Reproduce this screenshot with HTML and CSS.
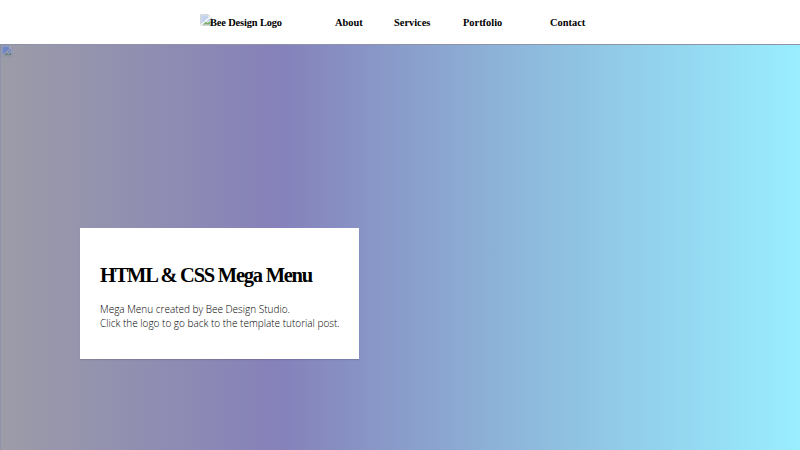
FILE: index.html
```html
<!DOCTYPE html>
<html lang="en">
<head>
<meta charset="utf-8">
<title>HTML &amp; CSS Mega Menu</title>
<link rel="stylesheet" href="styles.css">
</head>
<body>
<header class="nav">
  <a class="logo" href="#">
    <svg class="broken" viewBox="0 0 16 16" aria-hidden="true">
      <path d="M1 1h10l4 4v10H1z" fill="#eef0f3" stroke="#b4b8c0"/>
      <path d="M2 2h9v3h3v3l-4 3-2-2-6 5z" fill="#c3d3ef"/>
      <path d="M2 14l5-5 3 3 4-3v5H2z" fill="#7fae70"/>
      <path d="M1 15L15 3" stroke="#fff" stroke-width="1.5"/>
    </svg><span>Bee Design Logo</span>
  </a>
  <nav class="links">
    <a class="about" href="#">About</a>
    <a class="services" href="#">Services</a>
    <a class="portfolio" href="#">Portfolio</a>
    <a class="contact" href="#">Contact</a>
  </nav>
</header>
<main class="hero">
  <svg class="broken hero-icon" viewBox="0 0 16 16" aria-hidden="true">
    <path d="M1 1h10l4 4v10H1z" fill="#b4b8cc" stroke="#8a8fa6"/>
    <path d="M2 2h9v3h3v3l-4 3-2-2-6 5z" fill="#6f86c4"/>
    <path d="M2 14l5-5 3 3 4-3v5H2z" fill="#6b7f80"/>
    <path d="M1 15L15 3" stroke="#9c9ca8" stroke-width="1.5"/>
  </svg>
  <section class="card">
    <h1>HTML &amp; CSS Mega Menu</h1>
    <p>Mega Menu created by Bee Design Studio.<br>Click the logo to go back to the template tutorial post.</p>
  </section>
</main>
</body>
</html>
```
FILE: styles.css
```css
* { box-sizing: border-box; }
html, body { margin: 0; height: 100%; }
body { width: 800px; height: 450px; overflow: hidden; background: #fff; }
a { color: #000; text-decoration: none; }
.nav {
  height: 44px;
  padding: 1px 0 0 200px;
  display: flex;
  align-items: center;
  background: #fff;
  font: 700 10.4px/14px "Liberation Serif", serif;
}
.logo { display: flex; align-items: center; width: 135px; }
.logo span { letter-spacing: -.13px; }
.broken { width: 12px; height: 12px; flex: none; }
.logo .broken { margin-top: -5px; margin-right: -2px; }
.links { display: flex; }
.about { width: 59px; }
.services { width: 69px; }
.portfolio { width: 87px; }
.hero {
  height: 406px;
  padding: 183px 0 0 79px;
  position: relative;
  border: 1px solid #8f93a8;
  border-width: 1px 0 0 1px;
  background: linear-gradient(90deg, #9c9ca8 0%, #8581ba 35%, #8ebbdd 67%, #99eeff 100%);
}
.hero-icon { position: absolute; left: 0; top: 0; }
.card {
  width: 279px;
  height: 131px;
  padding: 34px 20px 0;
  background: #fff;
  box-shadow: 0 1px 1px rgba(0,0,0,.12);
}
h1 {
  margin: 0 0 14px;
  font: 700 20.5px/26px "Liberation Serif", serif;
  letter-spacing: -1.25px;
  color: #000;
  white-space: nowrap;
}
p {
  margin: 0;
  font: 300 10px/14px "Open Sans", sans-serif;
  color: #000;
  white-space: nowrap;
}
```
